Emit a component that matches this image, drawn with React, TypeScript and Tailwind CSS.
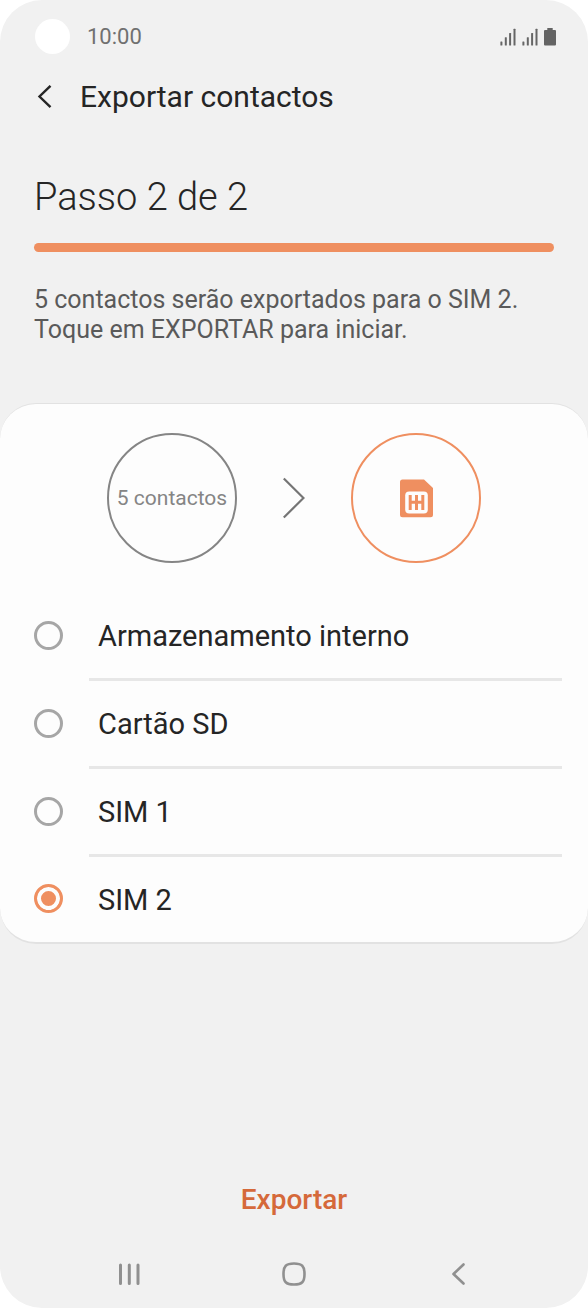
import { useState } from "react";

const targets = [
  { id: "internal", label: "Armazenamento interno" },
  { id: "sd", label: "Cartão SD" },
  { id: "sim1", label: "SIM 1" },
  { id: "sim2", label: "SIM 2" },
];

function SignalIcon() {
  return (
    <svg className="h-[18px] w-4" viewBox="0 0 16 18" fill="#666" aria-hidden="true">
      <rect x="0.4" y="13.4" width="2" height="4" rx="0.5" />
      <rect x="4.8" y="9.2" width="2" height="8.2" rx="0.5" />
      <rect x="9.1" y="5" width="2" height="12.4" rx="0.5" />
      <rect x="13.5" y="0.8" width="2" height="16.6" rx="0.5" />
    </svg>
  );
}

function BatteryIcon() {
  return (
    <svg className="h-[18px] w-3" viewBox="0 0 12 18" fill="#646464" aria-hidden="true">
      <path d="M3.3 0h5.4v2H11a1 1 0 0 1 1 1v13.500a1 1 0 0 1-1 1H1a1 1 0 0 1-1-1V3a1 1 0 0 1 1-1h2.300z" />
    </svg>
  );
}

function StatusBar() {
  return (
    <div className="flex h-[73px] items-center pr-8 pl-[35px]">
      <span className="size-[35px] rounded-full bg-white" />
      <span className="ml-[17px] text-[22px] leading-7 text-[#707070]">10:00</span>
      <div className="ml-auto flex items-center gap-[6px]">
        <SignalIcon />
        <SignalIcon />
        <BatteryIcon />
      </div>
    </div>
  );
}

function SimIcon() {
  return (
    <svg className="h-[39px] w-[33px]" viewBox="0 0 33 39" aria-hidden="true">
      <path d="M2.500 0.400H24L33 9v26.800a2.500 2.500 0 0 1-2.500 2.500h-28A2.500 2.500 0 0 1 0 35.800V2.900A2.500 2.500 0 0 1 2.500 0.400z" fill="#ef8f60" />
      <rect x="5.200" y="12.600" width="22.600" height="21.800" rx="4" fill="#fdfdfd" />
      <path d="M10.200 16v15M16.500 16v15M22.800 16v15M8.800 23.300h15.400" stroke="#ef8f60" strokeWidth="3" fill="none" />
    </svg>
  );
}

export default function App() {
  const [target, setTarget] = useState("sim2");

  return (
    <div className="min-h-screen bg-white font-[Roboto,sans-serif]">
      <div className="flex min-h-screen flex-col rounded-[42px] bg-[#f1f1f1]">
        <StatusBar />

        <header className="flex h-12 items-center pl-[33px]">
          <button type="button" aria-label="Voltar" className="flex size-6 items-center justify-center">
            <svg className="size-6" viewBox="0 0 24 24" fill="none" stroke="#252525" strokeWidth="2.400" aria-hidden="true">
              <path d="M17.500 0.800L6.500 11.500L17.500 22.200" />
            </svg>
          </button>
          <h1 className="ml-[23px] text-[30px] leading-9 text-[#252525]">Exportar contactos</h1>
        </header>

        <main>
          <section className="px-[34px] pt-[52px]">
            <h2 className="text-[38px] leading-[48px] font-light text-[#252525]">Passo 2 de 2</h2>
            <div
              role="progressbar"
              aria-label="Progresso"
              aria-valuemin={0}
              aria-valuemax={2}
              aria-valuenow={2}
              className="mt-[22px] h-[9px] rounded-full bg-[#ef8f60]"
            />
            <p className="mt-[33px] text-[25px] leading-[30px] text-[#5a5a5a]">
              5 contactos serão exportados para o SIM 2.
              <br />
              Toque em EXPORTAR para iniciar.
            </p>
          </section>

          <section className="mt-[58px] rounded-[36px] border-t border-b-2 border-[#e2e2e2] bg-[#fdfdfd] pt-[29px]">
            <div className="flex items-center justify-center gap-[46px]">
              <div className="flex size-[130px] items-center justify-center rounded-full border-2 border-[#858585] text-[21px] leading-7 whitespace-nowrap text-[#858585]">
                5 contactos
              </div>
              <svg className="h-[42px] w-[22px]" viewBox="0 0 22 42" fill="none" stroke="#757575" strokeWidth="2.200" aria-hidden="true">
                <path d="M0.800 1.500L20.500 21L0.800 40.500" />
              </svg>
              <div className="flex size-[130px] items-center justify-center rounded-full border-2 border-[#ef8f60]">
                <SimIcon />
              </div>
            </div>

            <fieldset aria-label="Destino" className="mt-[30px] pr-[26px] pl-[34px]">
              {targets.map((t) => (
                <div key={t.id} className="group flex">
                  <div className="flex w-[55px] items-center pb-[3px]">
                    <input
                      id={t.id}
                      type="radio"
                      name="target"
                      checked={target === t.id}
                      onChange={() => setTarget(t.id)}
                      className="size-[29px] appearance-none rounded-full border-3 border-[#a6a6a6] checked:border-[#ef8f60] checked:bg-[#ef8f60] checked:shadow-[inset_0_0_0_4px_#fdfdfd]"
                    />
                  </div>
                  <label
                    htmlFor={t.id}
                    className="flex min-h-[88px] flex-1 items-center border-b-3 border-[#e7e7e7] pl-[9px] text-[29px] leading-9 text-[#252525] group-last:min-h-[85px] group-last:border-b-0"
                  >
                    {t.label}
                  </label>
                </div>
              ))}
            </fieldset>
          </section>
        </main>

        <footer className="mt-auto">
          <div className="flex justify-center">
            <button type="button" className="px-6 py-2 text-[28px] leading-9 font-medium text-[#d5693a]">
              Exportar
            </button>
          </div>
          <nav className="mt-[14px] grid h-[68px] grid-cols-3 px-[46px]" aria-label="Sistema">
            <button type="button" aria-label="Recentes" className="flex items-center justify-center">
              <svg className="size-6" viewBox="0 0 24 24" stroke="#909090" strokeWidth="3" strokeLinecap="round" aria-hidden="true">
                <path d="M3.500 3v18.500M12.300 3v18.500M21 3v18.500" />
              </svg>
            </button>
            <button type="button" aria-label="Início" className="flex items-center justify-center">
              <svg className="size-6" viewBox="0 0 24 24" fill="none" stroke="#909090" strokeWidth="2.600" aria-hidden="true">
                <path d="M12 1.500C20 1.500 22.500 4 22.500 12S20 22.500 12 22.500S1.500 20 1.500 12S4 1.500 12 1.500z" />
              </svg>
            </button>
            <button type="button" aria-label="Retroceder" className="flex items-center justify-center">
              <svg className="size-6" viewBox="0 0 24 24" fill="none" stroke="#909090" strokeWidth="2.600" strokeLinecap="round" strokeLinejoin="round" aria-hidden="true">
                <path d="M16.500 2.500L6.500 12L16.500 21.500" />
              </svg>
            </button>
          </nav>
        </footer>
      </div>
    </div>
  );
}
